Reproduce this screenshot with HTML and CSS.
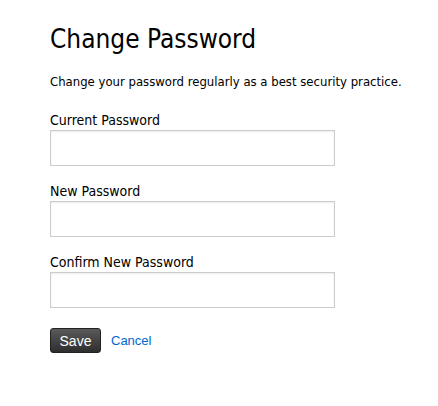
FILE: index.html
```html
<!DOCTYPE html>
<html lang="en">
<head>
    <meta charset="UTF-8">
    <meta name="viewport" content="width=device-width, initial-scale=1.0">
    <title>Change Password</title>
    <link rel="stylesheet" href="styles.css">
</head>
<body>
    <div class="container">
        <h1>Change Password</h1>
        <p class="intro">Change your password regularly as a best security practice.</p>

        <form class="password-form">
            <label for="current-password">Current Password</label>
            <input type="password" id="current-password">

            <label for="new-password">New Password</label>
            <input type="password" id="new-password">

            <label for="confirm-password">Confirm New Password</label>
            <input type="password" id="confirm-password">

            <div class="actions">
                <button type="submit">Save</button>
                <a href="#" class="cancel-link">Cancel</a>
            </div>
        </form>
    </div>
</body>
</html>
```

FILE: styles.css
```css
body {
    font-family: "DejaVu Sans Condensed", "DejaVu Sans", Tahoma, sans-serif;
    margin: 0;
    padding: 0;
    background-color: #fff;
    color: #000;
}

.container {
    padding: 24px 20px 25px 50px;
}

h1 {
    font-size: 26px;
    font-weight: normal;
    margin: 0 0 20px;
}

.intro {
    font-size: 13px;
    margin: 0 0 23px;
}

.password-form label {
    display: block;
    font-size: 14px;
    line-height: 17px;
    margin-bottom: 1px;
}

.password-form input {
    display: block;
    box-sizing: border-box;
    width: 285px;
    height: 36px;
    margin: 0 0 17px;
    border: 1px solid #ccc;
    box-shadow: inset 0 1px 2px rgba(0, 0, 0, 0.08);
}

.actions {
    display: flex;
    align-items: center;
    gap: 10px;
    margin-top: 20px;
}

.actions button {
    font-family: "Liberation Sans", Arial, sans-serif;
    font-size: 14px;
    color: #fff;
    width: 51px;
    height: 25px;
    padding: 0;
    border: 1px solid #222;
    border-radius: 3px;
    background: linear-gradient(#5a5a5a, #2e2e2e);
    cursor: pointer;
}

.cancel-link {
    font-family: "Liberation Sans", Arial, sans-serif;
    font-size: 13px;
    color: #0066cc;
    text-decoration: none;
}
```
